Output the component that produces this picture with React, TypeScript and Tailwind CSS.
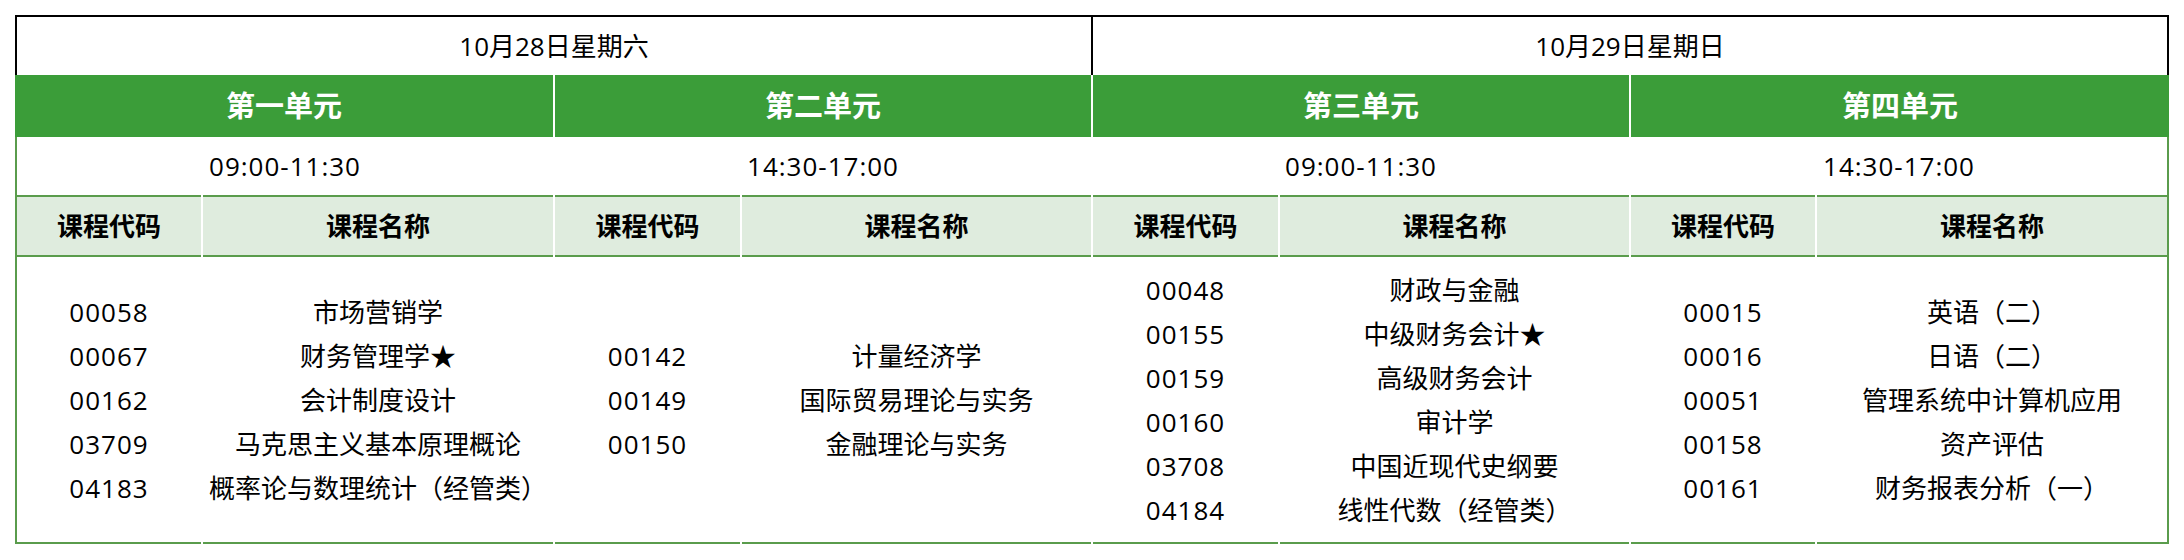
const units = [
  {
    title: '第一单元',
    time: '09:00-11:30',
    courses: [
      ['00058', '市场营销学'],
      ['00067', '财务管理学★'],
      ['00162', '会计制度设计'],
      ['03709', '马克思主义基本原理概论'],
      ['04183', '概率论与数理统计（经管类）'],
    ],
  },
  {
    title: '第二单元',
    time: '14:30-17:00',
    courses: [
      ['00142', '计量经济学'],
      ['00149', '国际贸易理论与实务'],
      ['00150', '金融理论与实务'],
    ],
  },
  {
    title: '第三单元',
    time: '09:00-11:30',
    courses: [
      ['00048', '财政与金融'],
      ['00155', '中级财务会计★'],
      ['00159', '高级财务会计'],
      ['00160', '审计学'],
      ['03708', '中国近现代史纲要'],
      ['04184', '线性代数（经管类）'],
    ],
  },
  {
    title: '第四单元',
    time: '14:30-17:00',
    courses: [
      ['00015', '英语（二）'],
      ['00016', '日语（二）'],
      ['00051', '管理系统中计算机应用'],
      ['00158', '资产评估'],
      ['00161', '财务报表分析（一）'],
    ],
  },
];

// 8 columnas: código / nombre por unidad, separadas por 2px
const cols = 'grid grid-cols-[184px_350px_185px_349px_185px_349px_184px_350px] gap-x-[2px]';

export default function App() {
  return (
    <div className="min-h-[560px] bg-white pl-[15px] pt-[15px] font-['Open_Sans','Noto_Sans_CJK_SC',sans-serif] text-black">
      <div className="w-[2154px]">
        {/* Fecha */}
        <div className="flex h-[60px] border-x-2 border-t-2 border-black text-[26px]">
          <div className="flex w-[1076px] items-center justify-center border-r-2 border-black">10月28日星期六</div>
          <div className="flex flex-1 items-center justify-center">10月29日星期日</div>
        </div>

        {/* Unidades */}
        <div className="grid h-[62px] grid-cols-[538px_536px_536px_538px] gap-x-[2px] bg-white">
          {units.map((u) => (
            <div key={u.title} className="flex items-center justify-center bg-[#3b9d39] text-[29px] font-bold text-white">
              {u.title}
            </div>
          ))}
        </div>

        {/* Horario */}
        <div className={`${cols} h-[58px] border-x-2 border-[#5a9c4c] text-[26px]`}>
          {units.map((u) => (
            <div key={u.title} className="col-span-2 flex items-center justify-center tracking-[1px]">
              {u.time}
            </div>
          ))}
        </div>

        {/* Cabecera */}
        <div className={`${cols} h-[62px] border-x-2 border-[#5a9c4c] text-[26px] font-bold`}>
          {units.map((u) => (
            <Header key={u.title} />
          ))}
        </div>

        {/* Cursos */}
        <div className={`${cols} h-[287px] border-x-2 border-[#5a9c4c] text-[26px] leading-[44px]`}>
          {units.map((u) => (
            <Body key={u.title} courses={u.courses} />
          ))}
        </div>
      </div>
    </div>
  );
}

function Header() {
  return (
    <>
      <div className="flex items-center justify-center border-y-2 border-[#5a9c4c] bg-[#dfecde]">课程代码</div>
      <div className="flex items-center justify-center border-y-2 border-[#5a9c4c] bg-[#dfecde]">课程名称</div>
    </>
  );
}

function Body({ courses }: { courses: string[][] }) {
  return (
    <>
      <div className="flex flex-col items-center justify-center border-b-2 border-[#5a9c4c] tracking-[1px]">
        {courses.map(([code]) => (
          <span key={code}>{code}</span>
        ))}
      </div>
      <div className="flex flex-col items-center justify-center border-b-2 border-[#5a9c4c]">
        {courses.map(([code, name]) => (
          <span key={code}>{name}</span>
        ))}
      </div>
    </>
  );
}
